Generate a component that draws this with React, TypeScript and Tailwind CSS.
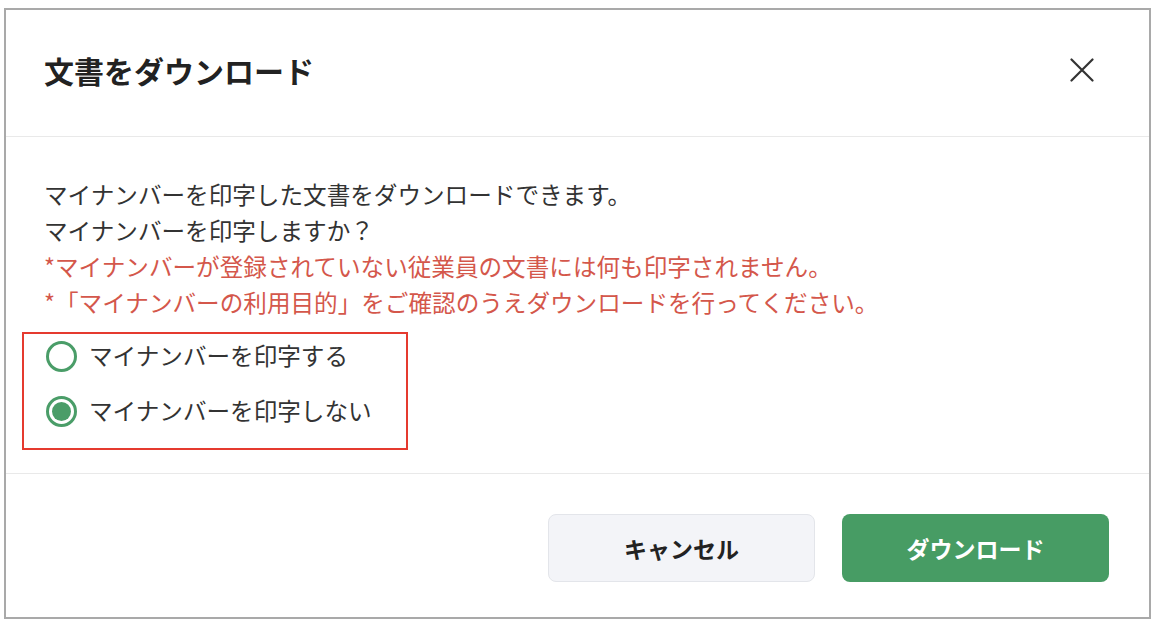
import { useState } from "react";

const jp = { fontFamily: '"Noto Sans CJK JP", "Noto Sans", sans-serif' };

type Choice = "print" | "noprint";

function Radio({ checked, label, onSelect }: { checked: boolean; label: string; onSelect: () => void }) {
  return (
    <button type="button" onClick={onSelect} className="flex h-[44px] items-center gap-[12px] text-left">
      <span className="flex h-[31px] w-[31px] shrink-0 items-center justify-center rounded-full border-[3px] border-[#4a9d68] bg-white">
        {checked && <span className="h-[19px] w-[19px] rounded-full bg-[#4a9d68]" />}
      </span>
      <span className="text-[23.6px] leading-none text-[#333]">{label}</span>
    </button>
  );
}

export default function App() {
  const [choice, setChoice] = useState<Choice>("noprint");

  return (
    <div className="min-h-[636px] w-[1168px] bg-white" style={jp}>
      <div className="ml-[4px] pt-[8px]">
        <div className="flex h-[611px] w-[1147px] flex-col border-2 border-[#a9a9a9] bg-white">
          {/* header */}
          <div className="flex h-[127px] items-center justify-between border-b border-[#e9e9e9] pb-[7px] pl-[38px] pr-[55px]">
            <h1 className="text-[30px] font-bold leading-none text-[#222]">文書をダウンロード</h1>
            <button type="button" aria-label="閉じる" className="text-[#333]">
              <svg width="24" height="24" viewBox="0 0 24 24" fill="none" stroke="currentColor" strokeWidth="2.2" strokeLinecap="round">
                <path d="M1.5 1.5 L22.5 22.5 M22.5 1.5 L1.5 22.5" />
              </svg>
            </button>
          </div>

          {/* body */}
          <div className="border-b border-[#e9e9e9] pb-[23px] pl-[38px] pt-[39px]">
            <div className="text-[23.6px] leading-[36px]">
              <p className="text-[#333]">マイナンバーを印字した文書をダウンロードできます。</p>
              <p className="text-[#333]">マイナンバーを印字しますか？</p>
              <p className="text-[#d4574b]">*マイナンバーが登録されていない従業員の文書には何も印字されません。</p>
              <p className="text-[#d4574b]">*「マイナンバーの利用目的」をご確認のうえダウンロードを行ってください。</p>
            </div>
            <div className="ml-[-22px] mt-[12px] flex w-[386px] flex-col gap-[11px] border-2 border-[#e53a2f] pb-[15px] pl-[22px]">
              <Radio checked={choice === "print"} label="マイナンバーを印字する" onSelect={() => setChoice("print")} />
              <Radio checked={choice === "noprint"} label="マイナンバーを印字しない" onSelect={() => setChoice("noprint")} />
            </div>
          </div>

          {/* footer */}
          <div className="flex justify-end gap-[27px] pr-[40px] pt-[40px]">
            <button
              type="button"
              className="flex h-[68px] w-[267px] items-center justify-center rounded-[8px] border border-[#e3e5ea] bg-[#f3f4f8] text-[23px] font-bold text-[#222]"
            >
              キャンセル
            </button>
            <button
              type="button"
              className="flex h-[68px] w-[267px] items-center justify-center rounded-[8px] bg-[#479c64] text-[23px] font-bold text-white"
            >
              ダウンロード
            </button>
          </div>
        </div>
      </div>
    </div>
  );
}
